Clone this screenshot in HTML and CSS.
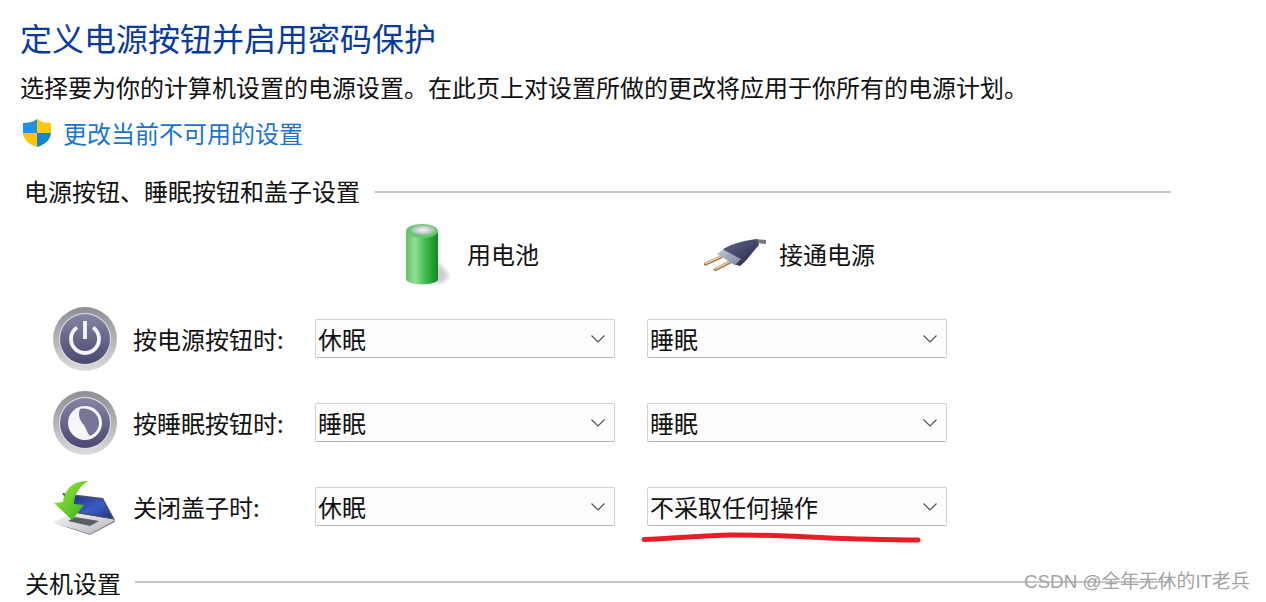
FILE: index.html
```html
<!DOCTYPE html>
<html lang="zh-CN">
<head>
<meta charset="utf-8">
<title>定义电源按钮并启用密码保护</title>
<link rel="stylesheet" href="styles.css">
</head>
<body>
<main class="page">
  <h1 class="title">定义电源按钮并启用密码保护</h1>
  <p class="intro">选择要为你的计算机设置的电源设置。在此页上对设置所做的更改将应用于你所有的电源计划。</p>
  <a class="link-row" href="#">
    <svg class="shield" viewBox="0 0 28 28" width="28" height="28">
      <path d="M14 0 C18 3 23 4 28 4 V14 H14 Z" fill="#ffc60a"/>
      <path d="M14 0 C10 3 5 4 0 4 V14 H14 Z" fill="#1f93dc"/>
      <path d="M0 14 H14 V28 C7 26 1 22 0 14 Z" fill="#ffc60a"/>
      <path d="M28 14 H14 V28 C21 26 27 22 28 14 Z" fill="#1585cf"/>
    </svg>
    <span>更改当前不可用的设置</span>
  </a>

  <div class="section-head section-power"><span>电源按钮、睡眠按钮和盖子设置</span><i class="rule"></i></div>

  <div class="sources">
    <div class="source">
      <svg class="battery" viewBox="0 0 48 64" width="48" height="64">
        <defs>
          <linearGradient id="batBody" x1="0" x2="1" y1="0" y2="0">
            <stop offset="0" stop-color="#5cc263"/><stop offset=".28" stop-color="#93e096"/>
            <stop offset=".62" stop-color="#3fba4e"/><stop offset="1" stop-color="#0d8722"/>
          </linearGradient>
          <radialGradient id="batCap">
            <stop offset="0" stop-color="#f4f4f8"/><stop offset=".6" stop-color="#c9cbdc"/><stop offset="1" stop-color="#8cc78f"/>
          </radialGradient>
          <filter id="soft" filterUnits="userSpaceOnUse" x="0" y="0" width="64" height="64"><feGaussianBlur stdDeviation="2.2"/></filter>
          <filter id="fine" filterUnits="userSpaceOnUse" x="0" y="0" width="64" height="64"><feGaussianBlur stdDeviation=".5"/></filter>
        </defs>
        <path d="M34 38 L46 52 L40 60 H30 Z" fill="#aaa" opacity=".6" filter="url(#soft)"/>
        <path d="M3 8 V56 C3 63 35 63 35 56 V8 Z" fill="url(#batBody)" filter="url(#fine)"/>
        <ellipse cx="19" cy="8" rx="16" ry="7" fill="#6cc572" filter="url(#fine)"/>
        <ellipse cx="20" cy="7" rx="12" ry="5" fill="url(#batCap)" filter="url(#fine)"/>
      </svg>
      <span>用电池</span>
    </div>
    <div class="source source-plug">
      <svg class="plug" viewBox="0 0 64 48" width="64" height="48">
        <defs>
          <linearGradient id="plugBody" x1="0" x2="1" y1="0" y2="1">
            <stop offset="0" stop-color="#62668a"/><stop offset=".5" stop-color="#44476a"/><stop offset="1" stop-color="#23243a"/>
          </linearGradient>
          <linearGradient id="plugFront" x1="0" x2="1" y1="0" y2="1">
            <stop offset="0" stop-color="#c4c8d6"/><stop offset="1" stop-color="#7f84a0"/>
          </linearGradient>
        </defs>
        <path d="M52 10 L63 11" stroke="#777" stroke-width="4" fill="none" filter="url(#fine)"/>
        <path d="M2.5 33 L18 26" stroke="#a97d48" stroke-width="3.4" stroke-linecap="round"/>
        <path d="M12.5 38.4 L30 29.5" stroke="#a97d48" stroke-width="3.4" stroke-linecap="round"/>
        <path d="M2.5 32.4 L18 25.4 M12.5 37.8 L30 29" stroke="#f0d8b2" stroke-width="1.3" stroke-linecap="round"/>
        <path d="M20 18 C30 12 44 9 54 8 L56 14 C50 20 44 30 37 35 L30 33 Z" fill="url(#plugBody)" filter="url(#fine)"/>
        <path d="M14 23 L20 18.5 L38 28 L32 34 Z" fill="url(#plugFront)" filter="url(#fine)"/>
      </svg>
      <span>接通电源</span>
    </div>
  </div>

  <div class="setting">
    <svg class="row-icon" viewBox="0 0 64 64" width="64" height="64">
      <defs>
        <linearGradient id="rim" x1="0" x2="0" y1="0" y2="1">
          <stop offset="0" stop-color="#8e8e96"/><stop offset=".5" stop-color="#b3b3b8"/><stop offset="1" stop-color="#dcdcdc"/>
        </linearGradient>
        <linearGradient id="disc" x1="0" x2="0" y1="0" y2="1">
          <stop offset="0" stop-color="#8585a3"/><stop offset="1" stop-color="#484872"/>
        </linearGradient>
        <filter id="glow" filterUnits="userSpaceOnUse" x="0" y="0" width="64" height="64"><feGaussianBlur stdDeviation=".6"/></filter>
      </defs>
      <circle cx="32" cy="32" r="32" fill="url(#rim)"/>
      <circle cx="32" cy="32" r="26" fill="#dfdfe4"/>
      <circle cx="32" cy="32" r="25" fill="url(#disc)"/>
      <path d="M24 20.5 A14 14 0 1 0 40 20.5" stroke="#f6f6fa" stroke-width="3.8" fill="none" filter="url(#glow)"/>
      <path d="M32 14 V32" stroke="#f6f6fa" stroke-width="3.8" filter="url(#glow)"/>
    </svg>
    <label class="setting-label">按电源按钮时:</label>
    <div class="select"><span>休眠</span><svg class="chev" viewBox="0 0 14 8" width="14" height="8"><path d="M.5.5 L7 7 L13.5.5" /></svg></div>
    <div class="select"><span>睡眠</span><svg class="chev" viewBox="0 0 14 8" width="14" height="8"><path d="M.5.5 L7 7 L13.5.5" /></svg></div>
  </div>

  <div class="setting">
    <svg class="row-icon" viewBox="0 0 64 64" width="64" height="64">
      <circle cx="32" cy="32" r="32" fill="url(#rim)"/>
      <circle cx="32" cy="32" r="26" fill="#dfdfe4"/>
      <circle cx="32" cy="32" r="25" fill="url(#disc)"/>
      <circle cx="32" cy="32" r="17" fill="#f6f6fa" filter="url(#glow)"/>
      <path d="M27 18 C36 16 46 22 46 32 C46 38 42 43 37 45 C33 40 33 36 30 33 C26 28 25 23 27 18 Z" fill="#75759a"/>
    </svg>
    <label class="setting-label">按睡眠按钮时:</label>
    <div class="select"><span>睡眠</span><svg class="chev" viewBox="0 0 14 8" width="14" height="8"><path d="M.5.5 L7 7 L13.5.5" /></svg></div>
    <div class="select"><span>睡眠</span><svg class="chev" viewBox="0 0 14 8" width="14" height="8"><path d="M.5.5 L7 7 L13.5.5" /></svg></div>
  </div>

  <div class="setting">
    <svg class="row-icon" viewBox="0 0 64 64" width="64" height="64">
      <defs>
        <linearGradient id="screen" x1="0" x2="1" y1="0" y2="1">
          <stop offset="0" stop-color="#1c2c78"/><stop offset=".6" stop-color="#3c5cc6"/><stop offset="1" stop-color="#22337c"/>
        </linearGradient>
        <linearGradient id="deck" x1="0" x2="1" y1="0" y2="1">
          <stop offset="0" stop-color="#f6f6f8"/><stop offset="1" stop-color="#b4b6bc"/>
        </linearGradient>
        <linearGradient id="arrow" x1="0" x2="1" y1="0" y2="1">
          <stop offset="0" stop-color="#a4e83a"/><stop offset="1" stop-color="#2fb01c"/>
        </linearGradient>
      </defs>
      <path d="M0.5 48 L37 60 L62 47 L62 45 L37 58 Z" fill="#8a8c94" filter="url(#glow)"/>
      <path d="M9 18 L50 23 L62 45 L22 38 Z" fill="#4c5068"/>
      <path d="M11 20 L49 24.5 L59 43 L23 36.5 Z" fill="url(#screen)"/>
      <path d="M0.5 47 L20 38 L62 45 L37 59 Z" fill="url(#deck)"/>
      <path d="M22 42 L46 46 L37 51 L15 46 Z" fill="#5a5c66" filter="url(#glow)"/>
      <path d="M35 6 C22 6 12 12 10 27 L1 28 L19 45 L31 30 L21 29 C21 20 26 12 35 6 Z" fill="url(#arrow)"/>
    </svg>
    <label class="setting-label">关闭盖子时:</label>
    <div class="select"><span>休眠</span><svg class="chev" viewBox="0 0 14 8" width="14" height="8"><path d="M.5.5 L7 7 L13.5.5" /></svg></div>
    <div class="select"><span>不采取任何操作</span><svg class="chev" viewBox="0 0 14 8" width="14" height="8"><path d="M.5.5 L7 7 L13.5.5" /></svg></div>
  </div>

  <div class="section-head section-shutdown"><span>关机设置</span><i class="rule"></i></div>
</main>

<svg class="scribble" viewBox="0 0 290 12" width="290" height="12">
  <path d="M3 8.5 C30 8 60 4.5 90 4 C130 3.5 180 7 220 8 C245 8.6 265 9 277 9"/>
</svg>
<div class="watermark">CSDN @全年无休的IT老兵</div>
</body>
</html>
```
FILE: styles.css
```css
* { box-sizing: border-box; }
html, body { margin: 0; height: 602px; overflow: hidden; background: #fff; }
body {
  position: relative;
  font-family: "Noto Sans CJK SC", "Liberation Sans", sans-serif;
  color: #111;
}
.page { padding: 17px 95px 0 21px; }
.title { margin: 0 0 0 -1px; font-size: 32px; line-height: 40px; font-weight: 400; color: #0a3a9e; }
.intro { margin: 14px 0 0 -1px; font-size: 24px; line-height: 32px; white-space: nowrap; }
.link-row {
  display: flex; align-items: center; gap: 12px;
  margin: 14px 0 0 2px; height: 32px;
  font-size: 24px; line-height: 32px; color: #1a73d4; text-decoration: none;
}
.shield { flex: none; }
.section-head {
  display: flex; align-items: center; gap: 15px;
  margin-left: 3px; height: 32px;
  font-size: 24px; line-height: 32px; white-space: nowrap;
}
.section-head span { margin-top: -2px; }
.section-power { margin-top: 27px; }
.section-shutdown { margin: 29px 0 0 4px; gap: 14px; }
.section-shutdown span { margin-top: 0; }
.section-shutdown .rule { margin-top: -3px; }
.rule { flex: 1; height: 2px; margin-top: -1px; background: #c6c6c6; }
.sources { display: flex; margin: 15px 0 0 382px; height: 64px; }
.source { display: flex; align-items: center; gap: 16px; width: 300px; font-size: 24px; }
.source span { margin-top: -4px; }
.source-plug { gap: 12px; }
.setting { display: flex; align-items: center; height: 63px; margin: 21px 0 0 32px; }
.sources + .setting { margin-top: 20px; }
.row-icon { flex: none; margin-right: 16px; }
.setting-label { flex: none; width: 182px; font-size: 24px; line-height: 32px; white-space: nowrap; }
.select {
  flex: none; display: flex; align-items: center; justify-content: space-between;
  width: 300px; height: 39px; padding: 0 9px 0 2px; margin-right: 32px;
  font-size: 24px; line-height: 32px;
  background: #fdfdfd;
  border: 1px solid #d0d0d0; border-bottom-color: #b8b8b8; border-radius: 2px;
}
.chev { flex: none; }
.chev path { fill: none; stroke: #555; stroke-width: 1.2; }
.scribble { position: absolute; left: 641px; top: 531px; }
.scribble path { fill: none; stroke: #e61f26; stroke-width: 5; stroke-linecap: round; }
.watermark {
  position: absolute; left: 1024px; top: 568px;
  font-size: 18.8px; line-height: 28px; color: #a3a3a3; white-space: nowrap;
  font-family: "Liberation Sans", "Noto Sans CJK SC", sans-serif;
}
```
